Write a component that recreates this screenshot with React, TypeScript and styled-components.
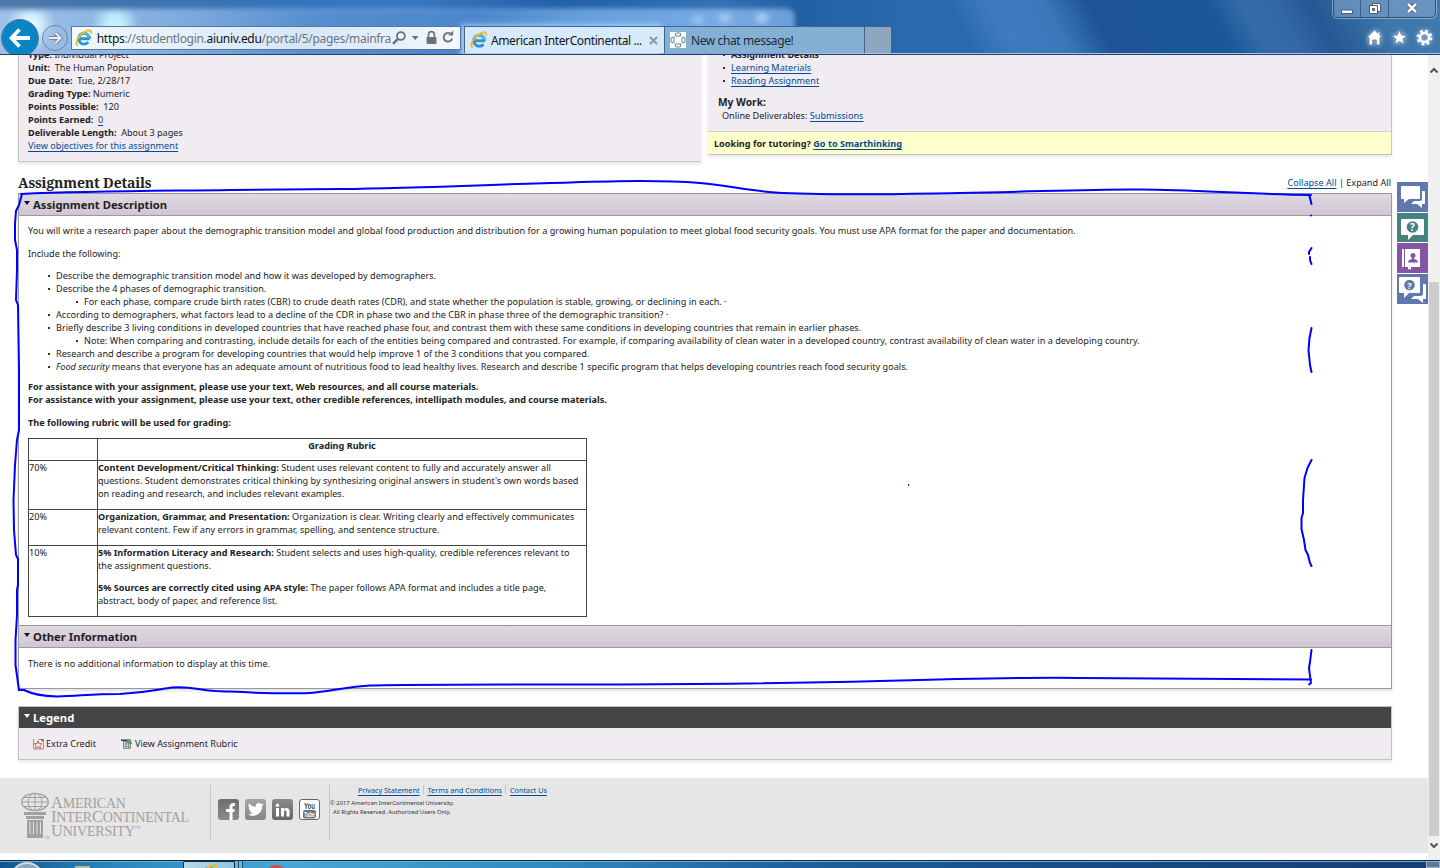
import type { PropsWithChildren } from 'react'
import styled, { createGlobalStyle, css } from 'styled-components'

const GlobalStyle = createGlobalStyle`
  * { box-sizing: border-box; }
  body {
    margin: 0;
    background: #fff;
    color: #222;
    font: 9.12px/13px 'Noto Sans', sans-serif;
    overflow: hidden;
  }
  p, h1, h2, ul { margin: 0; padding: 0; }
`

const Screen = styled.div`
  position: relative;
  display: flex;
  flex-direction: column;
  width: 1440px;
  height: 868px;
  overflow: hidden;
`

/* ---------- browser chrome ---------- */

const Chrome = styled.header`
  position: relative;
  isolation: isolate;
  flex: none;
  display: flex;
  align-items: flex-start;
  height: 55px;
  padding-top: 19px;
  overflow: hidden;
  border-bottom: 1px solid #263f66;
  box-shadow: inset 0 -1px 0 #a9c6e6;
  background:
    linear-gradient(90deg, rgba(110, 140, 165, 0.55), rgba(110, 140, 165, 0) 300px),
    linear-gradient(62deg, transparent 0 860px, #3f7bbf 900px, #3c77ba 945px, #1c5496 985px, #1d5799 1090px, #336ca9 1120px, #3268a5 1150px, #235893 1180px, #3f76ab 1240px, #4a7fb2 1400px),
    linear-gradient(90deg, #2563ae, #3a78bf 400px, #2460a8 560px, #3370b6 720px, #2160a3 800px, #2b69ae 900px);

  /* blurred window showing through the glass */
  &::before {
    content: '';
    position: absolute;
    z-index: -1;
    left: -20px;
    top: 9px;
    width: 812px;
    height: 70px;
    border-radius: 8px;
    border: 1px solid rgba(170, 205, 240, 0.8);
    filter: blur(2.5px);
    background:
      radial-gradient(ellipse 24px 26px at 50px 16px, rgba(225, 252, 255, 0.95) 30%, transparent),
      radial-gradient(ellipse 24px 26px at 134px 16px, rgba(200, 245, 255, 0.95) 30%, transparent),
      radial-gradient(ellipse 8px 6px at 717px 10px, rgba(200, 225, 250, 0.7), transparent),
      radial-gradient(ellipse 10px 7px at 744px 8px, rgba(200, 225, 250, 0.7), transparent),
      radial-gradient(ellipse 9px 8px at 781px 8px, rgba(215, 235, 255, 0.8), transparent),
      linear-gradient(180deg, transparent 0 12px, rgba(185, 222, 255, 0.85) 18px) 480px 0 / 200px 100% no-repeat,
      linear-gradient(90deg, #a3c3ea, #7facdf 200px, #568fd0 330px, #4a86cb 500px, #669fdd 600px, #76abe4 740px, #6a9fdb);
  }
`

const BackButton = styled.div`
  flex: none;
  display: grid;
  place-items: center;
  width: 38px;
  height: 38px;
  margin-left: 1px;
  border: 1px solid #5a7896;
  border-radius: 50%;
  background: #0785c5;
`

const ForwardButton = styled.div`
  flex: none;
  display: grid;
  place-items: center;
  width: 26px;
  height: 26px;
  margin: 6px 0 0 3px;
  border: 1px solid #6885ab;
  border-radius: 50%;
  background: rgba(160, 190, 225, 0.5);
`

const AddressBar = styled.div`
  flex: none;
  display: flex;
  align-items: center;
  width: 390px;
  height: 24px;
  margin: 7px 0 0 3px;
  padding: 0 5px 0 3px;
  border: 1px solid #59779b;
  background: linear-gradient(90deg, #f0f9fc, #e2eefb 35%, #d6e6f8 60%, #f3f8fd);
  color: #6d757d;
  font: 12px/22px 'Noto Sans', sans-serif;
`

const Url = styled.span`
  width: 299px;
  margin: 2px 0 0 4px;
  white-space: nowrap;
  letter-spacing: -0.31px;

  b {
    color: #111;
    font-weight: 400;
  }
`

const Tabs = styled.div`
  display: flex;
  margin: 7px 0 0 3px;
  height: 27px;
`

const Tab = styled.div<{ $active?: boolean; $width: number }>`
  display: flex;
  align-items: center;
  width: ${({ $width }) => $width}px;
  padding: 0 6px 0 5px;
  border: 1px solid #41658f;
  border-bottom: 0;
  border-left-width: ${({ $active }) => ($active ? 1 : 0)}px;
  background: ${({ $active }) => ($active ? '#d6eafb' : '#84b0d6')};
  color: ${({ $active }) => ($active ? '#151515' : '#1d2c3b')};
  font: 12px/24px 'Noto Sans', sans-serif;
  letter-spacing: -0.4px;
  white-space: nowrap;

  span {
    flex: 1;
    margin: 2px 0 0 ${({ $active }) => ($active ? 3 : 5)}px;
  }
`

const NewTab = styled.div`
  width: 27px;
  border: 1px solid #41658f;
  border-left: 0;
  border-bottom: 0;
  background: #8fa6c1;
`

const ChromeRight = styled.div`
  display: flex;
  flex-direction: column;
  align-items: flex-end;
  gap: 11px;
  margin: -20px 4px 0 auto;
`

const WindowButtons = styled.div`
  display: flex;
  width: 103px;
  height: 19px;
  border: 1px solid #2c4d76;
  border-radius: 0 0 5px 5px;
  box-shadow: 0 0 0 1px rgba(190, 215, 240, 0.55);
  background: rgba(130, 165, 205, 0.6);

  div {
    display: grid;
    place-items: center;
    flex: 27;
    border-left: 1px solid #3c5f89;
  }
  div:first-child { border-left: 0; }
  div:last-child { flex: 47; }
`

const ToolIcons = styled.div`
  display: flex;
  gap: 8px;
  padding-right: 3px;
  filter: drop-shadow(0 0 2px rgba(210, 230, 255, 0.8));
`

const IeLogo = () => (
  <svg width="18" height="18" viewBox="0 0 17 17" fill="none">
    <path d="M14 9.200H5M13.900 9.200A5.200 5.200 0 1 0 12.700 12.500" stroke="#2b93cf" strokeWidth="2.800" />
    <path d="M13.800 8.200A5.200 5.200 0 0 0 3.800 7.200" stroke="#6cc4ec" strokeWidth="1.300" />
    <path d="M2.700 15.800C-1 14 3.500 6 9 2.700 12.500 .5 16 .6 15.300 4.200" stroke="#f3b91c" strokeWidth="1.800" />
  </svg>
)

/* ---------- page ---------- */

const Viewport = styled.main`
  flex: none;
  display: flex;
  height: 805px;
  overflow: hidden;
`

const Page = styled.div`
  width: 1428px;
  height: 805px;
  overflow: hidden;
`

const Columns = styled.div`
  display: grid;
  grid-template-columns: 683px 684px;
  column-gap: 7px;
  align-items: start;
  height: 122px;
  margin: -7px 0 0 18px;
`

const panel = css`
  border: 1px solid #c6c3c7;
  background: #f1ecf2;
  box-shadow: 0 2px 3px rgba(0, 0, 0, 0.1);
`

const InfoPanel = styled.section`
  ${panel}
  height: 114px;
  padding-left: 9px;
  border-top: 0;
  border-right: 0;
`

const LinksPanel = styled.section`
  ${panel}
  height: 107px;
  border-top: 0;
  border-left: 0;
`

const Field = styled.p`
  white-space: pre;
`

const Link = styled.a`
  color: #004b91;
  text-decoration: underline;
  text-decoration-skip-ink: none;
  text-underline-offset: 2px;
`

const BulletList = styled.ul<{ $indent?: number }>`
  list-style: none;
  padding-left: ${({ $indent = 28 }) => $indent}px;
`

const Bullet = styled.li`
  white-space: nowrap;

  &::before {
    content: '';
    float: left;
    width: 2px;
    height: 2px;
    margin: 6px 0 0 -8px;
    background: #333;
  }
`

const MyWork = styled.div`
  height: 44px;
  padding: 9px 0 0 10px;

  h2 {
    font-size: 10.2px;
    line-height: 13px;
  }
  p { padding-left: 4px; }
`

const Tutoring = styled.p`
  height: 23px;
  padding-left: 6px;
  border-top: 1px solid #d5d0cc;
  background: #ffffcb;
  font-weight: 700;
  line-height: 23px;
`

const TitleRow = styled.div`
  display: flex;
  justify-content: space-between;
  align-items: center;
  width: 1373px;
  height: 23px;
  margin-left: 18px;
  padding-top: 2px;

  h1 {
    font: 700 14px/21px 'Noto Serif', 'Droid Serif', 'DejaVu Serif Condensed', 'DejaVu Serif', serif;
    letter-spacing: -0.14px;
  }
`

const Accordion = styled.section`
  width: 1374px;
  height: 496px;
  margin-left: 18px;
  border: 1px solid #9b999c;
  box-shadow: 0 2px 3px rgba(0, 0, 0, 0.12);
`

const Bar = styled.h2<{ $dark?: boolean }>`
  display: flex;
  align-items: center;
  height: ${({ $dark }) => ($dark ? 21 : 22)}px;
  padding-left: 5px;
  border-bottom: ${({ $dark }) => ($dark ? '0' : '1px solid #9b999c')};
  background: ${({ $dark }) => ($dark ? '#444' : 'linear-gradient(#dfdae1, #cfc6d4)')};
  color: ${({ $dark }) => ($dark ? '#fff' : '#222')};
  font-size: 11.25px;
  line-height: 21px;

  &::before {
    content: '';
    margin: -3px 3px 0 0;
    border: 3.5px solid transparent;
    border-top: 4px solid ${({ $dark }) => ($dark ? '#fff' : '#111')};
    border-bottom: 0;
  }
`

const Description = styled.div`
  height: 409px;
  padding: 8px 9px 0;
`

const Para = styled.p<{ $before?: number; $after?: number; $bold?: boolean }>`
  margin-top: ${({ $before = 0 }) => $before}px;
  margin-bottom: ${({ $after = 0 }) => $after}px;
  font-weight: ${({ $bold }) => ($bold ? 700 : 400)};
  white-space: nowrap;
`

const Rubric = styled.table`
  width: 559px;
  border-collapse: collapse;
  table-layout: fixed;

  th, td {
    padding: 0;
    border: 1px solid #444;
    vertical-align: top;
    text-align: left;
    white-space: nowrap;
  }
  th { text-align: center; }
  p + p { margin-top: 9px; }
`

const RubricRow = styled.tr<{ $height: number }>`
  height: ${({ $height }) => $height}px;
`

const OtherBody = styled.p`
  padding: 9px;
`

const OtherBar = styled(Bar)`
  height: 23px;
  border-top: 1px solid #9b999c;
`

const Legend = styled.section`
  ${panel}
  width: 1374px;
  height: 54px;
  margin: 17px 0 0 18px;
`

const LegendItems = styled.div`
  display: flex;
  gap: 25px;
  height: 31px;
  padding-left: 14px;

  span {
    display: flex;
    align-items: center;
    gap: 2px;
  }
`

const Footer = styled.footer`
  display: flex;
  height: 75px;
  margin-top: 18px;
  padding: 7px 0 12px 20px;
  background: #e6e6e6;
`

const Brand = styled.div`
  display: flex;
  width: 191px;
  padding-top: 7px;
  border-right: 1px solid #c6c6c6;
`

const BrandText = styled.div`
  margin: 4px 0 0 1px;
  color: #a1a1a1;
  font: 14px/14px 'Liberation Serif', serif;
  letter-spacing: -0.22px;
  text-transform: uppercase;
  white-space: nowrap;

  p { height: 14px; }
  b {
    font-size: 16.5px;
    font-weight: 400;
    line-height: 14px;
  }
  sup { font-size: 6px; line-height: 0; vertical-align: 6px; }
`

const Social = styled.div`
  display: flex;
  gap: 6px;
  width: 119px;
  padding: 14px 0 0 7px;
  border-right: 1px solid #c6c6c6;
`

const Badge = styled.div<{ $tone: string; $light?: boolean }>`
  display: grid;
  place-items: center;
  width: 21px;
  height: 21px;
  border: ${({ $light }) => ($light ? '1px solid #666' : '0')};
  border-radius: 3px;
  background: ${({ $tone }) => $tone};
`

const Legal = styled.div`
  font-size: 5.83px;
  line-height: 9px;
  white-space: nowrap;
  color: #333;

  p + p { padding-left: 3px; }
`

const LegalLinks = styled.div`
  display: flex;
  height: 14px;
  padding-left: 28px;
  font-size: 7.28px;
  line-height: 11px;

  a + a {
    margin-left: 3px;
    padding-left: 4px;
    border-left: 1px solid #c6c6c6;
    height: 9px;
  }
`

const ScrollTrack = styled.div`
  display: flex;
  flex-direction: column;
  align-items: center;
  justify-content: space-between;
  width: 12px;
  padding: 12px 0 11px;
  background: #f0f0f0;
`

const ScrollThumb = styled.div`
  width: 10px;
  height: 554px;
  margin-top: auto;
  margin-bottom: 6px;
  background: #cdcdcd;
`

const SideTools = styled.nav`
  position: absolute;
  top: 182px;
  left: 1397px;
  display: grid;
  gap: 1px;

  svg { display: block; }
`

const Taskbar = styled.footer`
  display: flex;
  height: 8px;
  padding-left: 10px;
  overflow: hidden;
  border-top: 1px solid #0e2a45;
  box-shadow: inset 0 1px 0 #74a9cf;
  background: linear-gradient(90deg, #12568f, #2a86be 110px, #3596cb 200px, #49a5d6 290px, #2f88bf 560px, #1d5f9c 800px, #174b84 1100px, #153e73);
`

const StartOrb = styled.div`
  flex: none;
  width: 34px;
  height: 34px;
  margin-top: 1px;
  border: 2px solid #cddce8;
  border-radius: 50%;
  background: #8ba7bd;
`

const FolderTab = styled.div`
  width: 15px;
  height: 6px;
  margin: 5px 0 0 31px;
  background: #bdb98f;
`

const TaskItem = styled.div`
  display: flex;
  justify-content: center;
  width: 52px;
  margin-left: 93px;
  padding: 2px 0 0;
  border: 1px solid #10273d;
  border-bottom: 0;
  border-radius: 2px 2px 0 0;
  background: linear-gradient(90deg, #b8d8e7, #8cc7e1);
`

const TaskStack = styled.div`
  width: 4px;
  border-right: 1px solid #1b506f;
  background: #6bb5d8;
`

const ChromeDot = styled.div`
  width: 22px;
  height: 22px;
  margin: 4px 0 0 22px;
  border-radius: 50%;
  background: #dd4b3e;
`

const ShowDesktop = styled.div`
  width: 14px;
  margin-left: auto;
  border: 1px solid #9db2c8;
  background: #5a7a9d;
`

const Ink = styled.svg`
  position: absolute;
  inset: 0;
  pointer-events: none;
  fill: none;
  stroke: #0000ff;
  stroke-width: 2;
  stroke-linecap: round;
  stroke-linejoin: round;
`

const Labelled = ({ label, children }: PropsWithChildren<{ label: string }>) => (
  <Field><b>{label}</b>{children}</Field>
)

const inkPaths = [
  'M21 194C90 191 160 191 230 190L340 189C430 188 500 184 570 182.500C620 181 660 180 700 183C730 186 745 190 775 192.500C830 196 900 194 960 193C1030 192 1090 189 1140 189.500C1200 190 1240 194 1311 195',
  'M22 194L19 205L16 211L15 224L15 240L17 250L17 270L16 300L18 305L19 370L19 410L19 430L17 440L15 465L13.500 500L14 530L16 555L18 559V585L17 590V615L15.500 640V665L19 690',
  'M19 690L24 690C30 693 40 696 57 696.500C80 696 90 694 120 694C150 692 160 689 172 687.500C190 686 200 690 215 691C240 692 290 695 315 692.500C340 690 345 687 370 685.500C420 684 520 684.500 620 684.500C720 684 800 683 880 681C950 679 1020 677 1080 678L1311 679.500',
  'M1309.500 196L1311.500 204M1311 215.500V215.600M1311.500 248L1309 252V254M1310 257V260L1311.500 264',
  'M1311.500 328L1309.500 338L1308.500 350L1310 365L1311.500 372',
  'M1311.500 460L1307.500 468L1304.500 478L1303 500V513L1301.500 518V529L1304 540L1305.500 550L1308 555L1310 563L1311.500 566',
  'M1311.500 650L1310 662L1309 668L1310 676L1311 683L1309 684.500',
]

export default function App() {
  return (
    <Screen>
      <GlobalStyle />
      <Chrome>
        <BackButton>
          <svg width="22" height="20" viewBox="0 0 22 20" fill="none" stroke="#fff" strokeWidth="3.800"><path d="M21 10H3M10.500 1.500L2.500 10L10.500 18.500" /></svg>
        </BackButton>
        <ForwardButton>
          <svg width="15" height="14" viewBox="0 0 15 14" fill="none"><path d="M1 7h11M7.500 2l5 5-5 5" stroke="#7189aa" strokeWidth="4" /><path d="M1 7h11M7.500 2l5 5-5 5" stroke="#e6eef8" strokeWidth="2" /></svg>
        </ForwardButton>
        <AddressBar>
          <IeLogo />
          <Url><b>https</b>://studentlogin.<b>aiuniv.edu</b>/portal/5/pages/mainfra</Url>
          <svg width="64" height="16" viewBox="0 0 64 16" fill="none" stroke="#6e7276">
            <circle cx="9" cy="6" r="4" strokeWidth="1.800" /><path d="M6 9L1 14" strokeWidth="2.500" />
            <path d="M20 6h7l-3.500 4z" fill="#6e7276" stroke="none" />
            <path d="M35 7h10v7H35z" fill="#6e7276" stroke="none" /><path d="M37 8V4.500a3 3 0 0 1 6 0V8" strokeWidth="1.600" />
            <path d="M60 4.200A4.400 4.400 0 1 0 61 8.500" strokeWidth="1.900" /><path d="M57 5.500h5V.5z" fill="#6e7276" stroke="none" />
          </svg>
        </AddressBar>
        <Tabs>
          <Tab $active $width={201}>
            <IeLogo />
            <span>American InterContinental ...</span>
            <svg width="9" height="9" viewBox="0 0 9 9" stroke="#8a97a5" strokeWidth="2"><path d="M1 1l7 7M8 1L1 8" /></svg>
          </Tab>
          <Tab $width={200}>
            <svg width="16" height="16" viewBox="0 0 16 16" fill="#fff" stroke="#55808f" strokeWidth="1">
              <path d="M0 0h16v16H0z" stroke="none" />
              <circle cx="8" cy="8" r="5" fill="none" strokeDasharray="2 1.500" />
              <rect x="5.500" y="1" width="5" height="3" rx="1" /><rect x="5.500" y="12" width="5" height="3" rx="1" />
              <rect x="1" y="5.500" width="3" height="5" rx="1" /><rect x="12" y="5.500" width="3" height="5" rx="1" />
            </svg>
            <span>New chat message!</span>
          </Tab>
          <NewTab />
        </Tabs>
        <ChromeRight>
          <WindowButtons>
            <div><svg width="12" height="18" viewBox="0 0 12 18"><path d="M.5 10h11v3.500H.5z" fill="#fff" stroke="#4a5b70" /></svg></div>
            <div><svg width="12" height="14" viewBox="0 0 12 14" fill="#fff" stroke="#4a5b70"><path d="M3.500 1.500h8v8h-8z" /><path d="M.5 3.500h8v8h-8z" /><path d="M3.500 6.500h2v2h-2z" fill="#6f8fb5" /></svg></div>
            <div><svg width="12" height="14" viewBox="0 0 12 14" fill="none"><path d="M2 2l8 8M10 2l-8 8" stroke="#4a5b70" strokeWidth="4.500" /><path d="M2 2l8 8M10 2l-8 8" stroke="#fff" strokeWidth="2.500" /></svg></div>
          </WindowButtons>
          <ToolIcons>
            <svg width="17" height="17" viewBox="0 0 17 17" fill="#fff" stroke="#50698a" strokeWidth=".8"><path d="M8.500 1L12 4.300V2.500h2v3.800L16.300 8.700H14V16h-3.800v-5H6.800v5H3V8.700H.7z" /></svg>
            <svg width="17" height="17" viewBox="0 0 17 17" fill="#fff" stroke="#50698a" strokeWidth=".7"><path d="M8.500.8l2.100 5.300 5.700.3-4.400 3.600 1.500 5.600-4.900-3.100-4.900 3.100 1.500-5.600L.7 6.400l5.700-.3z" /></svg>
            <svg width="17" height="17" viewBox="0 0 17 17" fill="none"><circle cx="8.500" cy="8.500" r="6.500" stroke="#fff" strokeWidth="2.800" strokeDasharray="2.600 2.500" /><circle cx="8.500" cy="8.500" r="4.500" stroke="#fff" strokeWidth="2.500" /></svg>
          </ToolIcons>
        </ChromeRight>
      </Chrome>

      <Viewport>
        <Page>
          <Columns>
            <InfoPanel>
              <Labelled label="Type:"> Individual Project</Labelled>
              <Labelled label="Unit:">{'  The Human Population'}</Labelled>
              <Labelled label="Due Date:">{'  Tue, 2/28/17'}</Labelled>
              <Labelled label="Grading Type:"> Numeric</Labelled>
              <Labelled label="Points Possible:">{'  120'}</Labelled>
              <Labelled label="Points Earned:">{'  '}<Link>0</Link></Labelled>
              <Labelled label="Deliverable Length:">{'  About 3 pages'}</Labelled>
              <Link>View objectives for this assignment</Link>
            </InfoPanel>
            <LinksPanel>
              <BulletList $indent={23}>
                <Bullet><b>Assignment Details</b></Bullet>
                <Bullet><Link>Learning Materials</Link></Bullet>
                <Bullet><Link>Reading Assignment</Link></Bullet>
              </BulletList>
              <MyWork>
                <h2>My Work:</h2>
                <p>Online Deliverables: <Link>Submissions</Link></p>
              </MyWork>
              <Tutoring>Looking for tutoring? <Link>Go to Smarthinking</Link></Tutoring>
            </LinksPanel>
          </Columns>

          <TitleRow>
            <h1>Assignment Details</h1>
            <span><Link>Collapse All</Link> | Expand All</span>
          </TitleRow>

          <Accordion>
            <Bar>Assignment Description</Bar>
            <Description>
              <Para $after={10}>You will write a research paper about the demographic transition model and global food production and distribution for a growing human population to meet global food security goals. You must use APA format for the paper and documentation.</Para>
              <Para $after={9}>Include the following:</Para>
              <BulletList>
                <Bullet>Describe the demographic transition model and how it was developed by demographers.</Bullet>
                <Bullet>
                  Describe the 4 phases of demographic transition.
                  <BulletList>
                    <Bullet>For each phase, compare crude birth rates (CBR) to crude death rates (CDR), and state whether the population is stable, growing, or declining in each. ·</Bullet>
                  </BulletList>
                </Bullet>
                <Bullet>According to demographers, what factors lead to a decline of the CDR in phase two and the CBR in phase three of the demographic transition? ·</Bullet>
                <Bullet>
                  Briefly describe 3 living conditions in developed countries that have reached phase four, and contrast them with these same conditions in developing countries that remain in earlier phases.
                  <BulletList>
                    <Bullet>Note: When comparing and contrasting, include details for each of the entities being compared and contrasted. For example, if comparing availability of clean water in a developed country, contrast availability of clean water in a developing country.</Bullet>
                  </BulletList>
                </Bullet>
                <Bullet>Research and describe a program for developing countries that would help improve 1 of the 3 conditions that you compared.</Bullet>
                <Bullet><i>Food security</i> means that everyone has an adequate amount of nutritious food to lead healthy lives. Research and describe 1 specific program that helps developing countries reach food security goals.</Bullet>
              </BulletList>
              <Para $bold $before={7}>For assistance with your assignment, please use your text, Web resources, and all course materials.</Para>
              <Para $bold $after={10}>For assistance with your assignment, please use your text, other credible references, intellipath modules, and course materials.</Para>
              <Para $bold $after={9}>The following rubric will be used for grading:</Para>
              <Rubric>
                <colgroup><col width="69" /><col /></colgroup>
                <tbody>
                  <RubricRow $height={22}><td /><th>Grading Rubric</th></RubricRow>
                  <RubricRow $height={49}>
                    <td>70%</td>
                    <td><b>Content Development/Critical Thinking:</b> Student uses relevant content to fully and accurately answer all<br />questions. Student demonstrates critical thinking by synthesizing original answers in student's own words based<br />on reading and research, and includes relevant examples.</td>
                  </RubricRow>
                  <RubricRow $height={36}>
                    <td>20%</td>
                    <td><b>Organization, Grammar, and Presentation:</b> Organization is clear. Writing clearly and effectively communicates<br />relevant content. Few if any errors in grammar, spelling, and sentence structure.</td>
                  </RubricRow>
                  <RubricRow $height={71}>
                    <td>10%</td>
                    <td>
                      <p><b>5% Information Literacy and Research:</b> Student selects and uses high-quality, credible references relevant to<br />the assignment questions.</p>
                      <p><b>5% Sources are correctly cited using APA style:</b> The paper follows APA format and includes a title page,<br />abstract, body of paper, and reference list.</p>
                    </td>
                  </RubricRow>
                </tbody>
              </Rubric>
            </Description>
            <OtherBar>Other Information</OtherBar>
            <OtherBody>There is no additional information to display at this time.</OtherBody>
          </Accordion>

          <Legend>
            <Bar $dark>Legend</Bar>
            <LegendItems>
              <span>
                <svg width="11" height="12" viewBox="0 0 11 12" fill="none"><path d="M.5 1v10h10V4L8 1.500H5" stroke="#999" /><path d="M7.500 1h3v3z" fill="#555" /><path d="M5 3l1 2.500 2.800.2-2 1.900.7 2.900L5 9l-2.500 1.500.7-2.900-2-1.900L4 5.500z" stroke="#e0583c" /></svg>
                Extra Credit
              </span>
              <span>
                <svg width="12" height="12" viewBox="0 0 12 12" fill="none"><path d="M2.500 3.500h7v7h-7zM2.500 6h7M2.500 8.500h7M5 3v8M7.500 3v8" stroke="#888" /><path d="M0 1.500h6v1.500H0z" fill="#333" /><path d="M6 5V2h3v3h2" stroke="#2d9b58" strokeWidth="1.500" /></svg>
                View Assignment Rubric
              </span>
            </LegendItems>
          </Legend>

          <Footer>
            <Brand>
              <svg width="30" height="48" viewBox="0 0 30 48" fill="none" stroke="#a1a1a1">
                <ellipse cx="15" cy="10" rx="13.300" ry="8.700" strokeWidth="1.300" /><ellipse cx="15" cy="10" rx="7" ry="8.700" /><path d="M15 1v18M2 10h26M4 5.500h22M4 14.500h22" />
                <path d="M4 20h22v3H4zM6 24h18v3H6zM7 28h16v18H7z" fill="#a1a1a1" stroke="none" />
                <path d="M10 30v12M13.500 30v12M17 30v12M20.500 30v12" stroke="#e6e6e6" strokeWidth=".9" />
                <text x="24" y="46.500" fontFamily="Liberation Sans" fontSize="3.600" fill="#a1a1a1" stroke="none">TM</text>
              </svg>
              <BrandText>
                <p><b>A</b>merican</p>
                <p><b>I</b>nter<b>C</b>ontinental</p>
                <p><b>U</b>niversity<sup>™</sup></p>
              </BrandText>
            </Brand>
            <Social>
              <Badge $tone="linear-gradient(#6d6d6d, #8b8b8b)"><svg width="21" height="21" viewBox="0 0 21 21" fill="none" stroke="#fff" strokeWidth="3"><path d="M17 5.500h-1.500q-2.500 0-2.500 2.500v13M8 11.500h8.500" /></svg></Badge>
              <Badge $tone="linear-gradient(#a5a5a5, #858585)"><svg width="16" height="15" viewBox="0 0 24 22" fill="#fff"><path d="M23.600 3.500a10 10 0 0 1-2.700.8A4.900 4.900 0 0 0 23 1.600a9 9 0 0 1-3.100 1.200A4.900 4.900 0 0 0 11.500 7.200 14 14 0 0 1 1.500 2.100 4.900 4.900 0 0 0 3 8.700a5 5 0 0 1-2.200-.6 4.900 4.900 0 0 0 3.900 4.800 5 5 0 0 1-2.200.1A4.900 4.900 0 0 0 7 16.400 10 10 0 0 1 0 18.500 14 14 0 0 0 21.200 6z" /></svg></Badge>
              <Badge $tone="linear-gradient(#8a8a8a, #686868)"><svg width="15" height="14" viewBox="0 0 15 14" fill="#fff"><path d="M1 5h3v8.500H1z" /><circle cx="2.500" cy="2.200" r="1.700" /><path d="M6 5h3v1.200C10.500 4 14.500 4.500 14.500 8v5.500h-3V9c0-2.500-2.500-2.300-2.500 0v4.500H6z" /></svg></Badge>
              <Badge $tone="#fff" $light><svg width="17" height="18" viewBox="0 0 17 18"><text x="8.500" y="8" textAnchor="middle" fontFamily="Liberation Sans" fontWeight="700" fontSize="8.500" textLength="11" lengthAdjust="spacingAndGlyphs" fill="#444">You</text><rect x="2" y="9" width="13" height="8.500" rx="2" fill="#777" /><text x="8.500" y="16" textAnchor="middle" fontFamily="Liberation Sans" fontWeight="700" fontSize="7" textLength="11" lengthAdjust="spacingAndGlyphs" fill="#fff">Tube</text></svg></Badge>
            </Social>
            <Legal>
              <LegalLinks><Link>Privacy Statement</Link><Link>Terms and Conditions</Link><Link>Contact Us</Link></LegalLinks>
              <p>© 2017 American InterContinental University.</p>
              <p>All Rights Reserved. Authorized Users Only.</p>
            </Legal>
          </Footer>
        </Page>
        <ScrollTrack>
          <svg width="10" height="7" viewBox="0 0 10 7" fill="none" stroke="#555" strokeWidth="2"><path d="M1.500 5.500L5 2l3.500 3.500" /></svg>
          <ScrollThumb />
          <svg width="10" height="7" viewBox="0 0 10 7" fill="none" stroke="#555" strokeWidth="2"><path d="M1.500 1.500L5 5l3.500-3.500" /></svg>
        </ScrollTrack>
      </Viewport>

      <Taskbar>
        <StartOrb />
        <FolderTab />
        <TaskItem><IeLogo /></TaskItem>
        <TaskStack />
        <TaskStack />
        <ChromeDot />
        <ShowDesktop />
      </Taskbar>

      <SideTools>
        <svg width="31" height="30" viewBox="0 0 31 30" fill="#fff"><path d="M0 0h31v30H0z" fill="#6078ab" /><path d="M5 4h17q1 0 1 1v11q0 1-1 1H12l-5 4v-4H5q-1 0-1-1V5q0-1 1-1z" /><path d="M25 9h2q1 0 1 1v11q0 1-1 1h-2v4l-5-4h-6l3-3h6q2 0 2-2z" /></svg>
        <svg width="31" height="29" viewBox="0 0 31 29" fill="#fff"><path d="M0 0h31v29H0z" fill="#46837f" /><path d="M5 6h21q1 0 1 1v14q0 1-1 1H16l-5 5v-5H5q-1 0-1-1V7q0-1 1-1z" /><circle cx="15.500" cy="14" r="5.800" fill="#46837f" /><text x="15.500" y="17.500" textAnchor="middle" fontFamily="Noto Sans" fontWeight="700" fontSize="10">?</text></svg>
        <svg width="31" height="30" viewBox="0 0 31 30" fill="#fff"><path d="M0 0h31v30H0z" fill="#8256a5" /><path d="M5 6h2v18H5zM8 6h15v18h-9v3l-1.500-1.500L11 27v-3H8z" /><circle cx="16" cy="12.500" r="2.500" fill="#8256a5" /><path d="M11 19.500q0-3 4-3.500v-2h2v2q4 .5 4 3.500z" fill="#8256a5" /></svg>
        <svg width="31" height="30" viewBox="0 0 31 30" fill="#fff"><path d="M0 0h31v30H0z" fill="#6078ab" /><path d="M3 3h19q1 0 1 1v14q0 1-1 1H12l-5 5v-5H3q-1 0-1-1V4q0-1 1-1z" /><circle cx="12.500" cy="11" r="5.300" fill="#6078ab" /><text x="12.500" y="14.500" textAnchor="middle" fontFamily="Noto Sans" fontWeight="700" fontSize="9">?</text><path d="M26 10h2q1 0 1 1v13q0 1-1 1h-2v4l-5-4h-7l3-3h6q3 0 3-3z" /></svg>
      </SideTools>

      <Ink width="1440" height="868" viewBox="0 0 1440 868">
        {inkPaths.map((d) => <path key={d} d={d} />)}
        <circle cx="908.500" cy="485" r=".3" strokeWidth="1" />
      </Ink>
    </Screen>
  )
}
